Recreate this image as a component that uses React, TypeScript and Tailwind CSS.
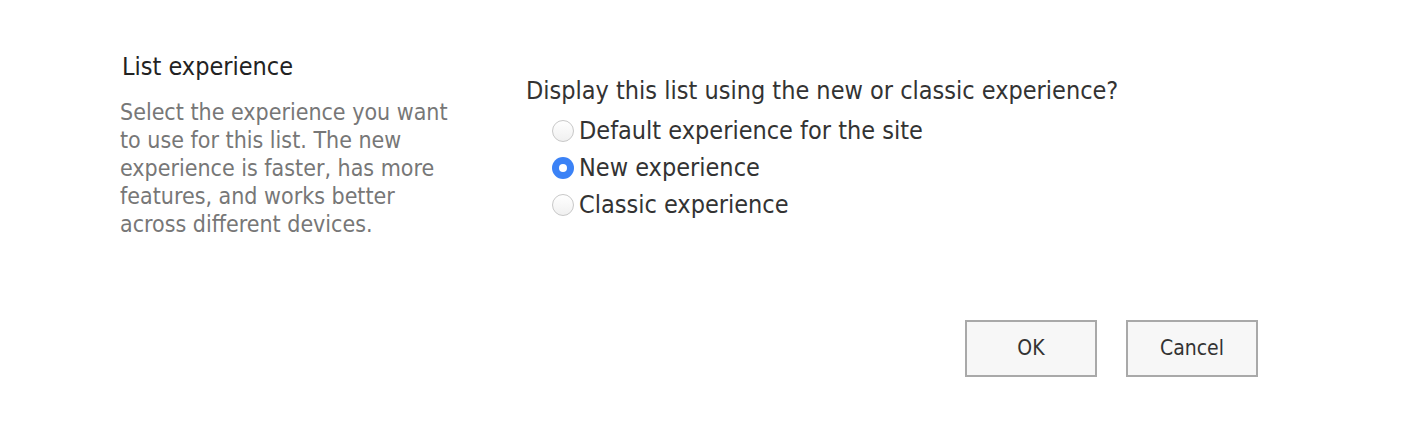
import { useState } from 'react';

type Option = { id: string; label: string };

const options: Option[] = [
  { id: 'default', label: 'Default experience for the site' },
  { id: 'new', label: 'New experience' },
  { id: 'classic', label: 'Classic experience' },
];

function Radio({ checked }: { checked: boolean }) {
  if (checked) {
    return (
      <span className="flex h-[22px] w-[22px] shrink-0 items-center justify-center rounded-full bg-[#3b82f6]">
        <span className="h-[8px] w-[8px] rounded-full bg-white" />
      </span>
    );
  }
  return (
    <span className="h-[22px] w-[22px] shrink-0 rounded-full border border-[#c8c8c8] bg-gradient-to-b from-white to-[#f0f0f0]" />
  );
}

export default function App() {
  const [mode, setMode] = useState('new');

  return (
    <div className="h-[422px] w-full bg-white font-['DejaVu_Sans_Condensed',sans-serif] text-[#333]">
      <div className="flex pt-[53px]">
        <div className="ml-[120px] w-[345px]">
          <h2 className="pl-[2px] text-[25px] leading-[28px] text-[#222]">List experience</h2>
          <p className="mt-[17px] text-[23px] leading-[28px] text-[#777]">
            Select the experience you want to use for this list. The new experience is faster, has more
            features, and works better across different devices.
          </p>
        </div>
        <div className="ml-[61px] pt-[24px]">
          <p className="text-[25px] leading-[28px]">Display this list using the new or classic experience?</p>
          <div className="mt-[12px] flex flex-col gap-[9px] pl-[26px]">
            {options.map((o) => (
              <label
                key={o.id}
                onClick={() => setMode(o.id)}
                className="flex cursor-pointer items-center gap-[5px] text-[25px] leading-[28px]"
              >
                <Radio checked={mode === o.id} />
                {o.label}
              </label>
            ))}
          </div>
        </div>
      </div>
      <div className="mt-[82px] flex justify-end gap-[29px] pr-[146px]">
        <button
          type="button"
          className="h-[57px] w-[132px] border-2 border-[#a9a9a9] bg-[#f7f7f7] text-[21px] text-[#333]"
        >
          OK
        </button>
        <button
          type="button"
          className="h-[57px] w-[132px] border-2 border-[#a9a9a9] bg-[#f7f7f7] text-[21px] text-[#333]"
        >
          Cancel
        </button>
      </div>
    </div>
  );
}
